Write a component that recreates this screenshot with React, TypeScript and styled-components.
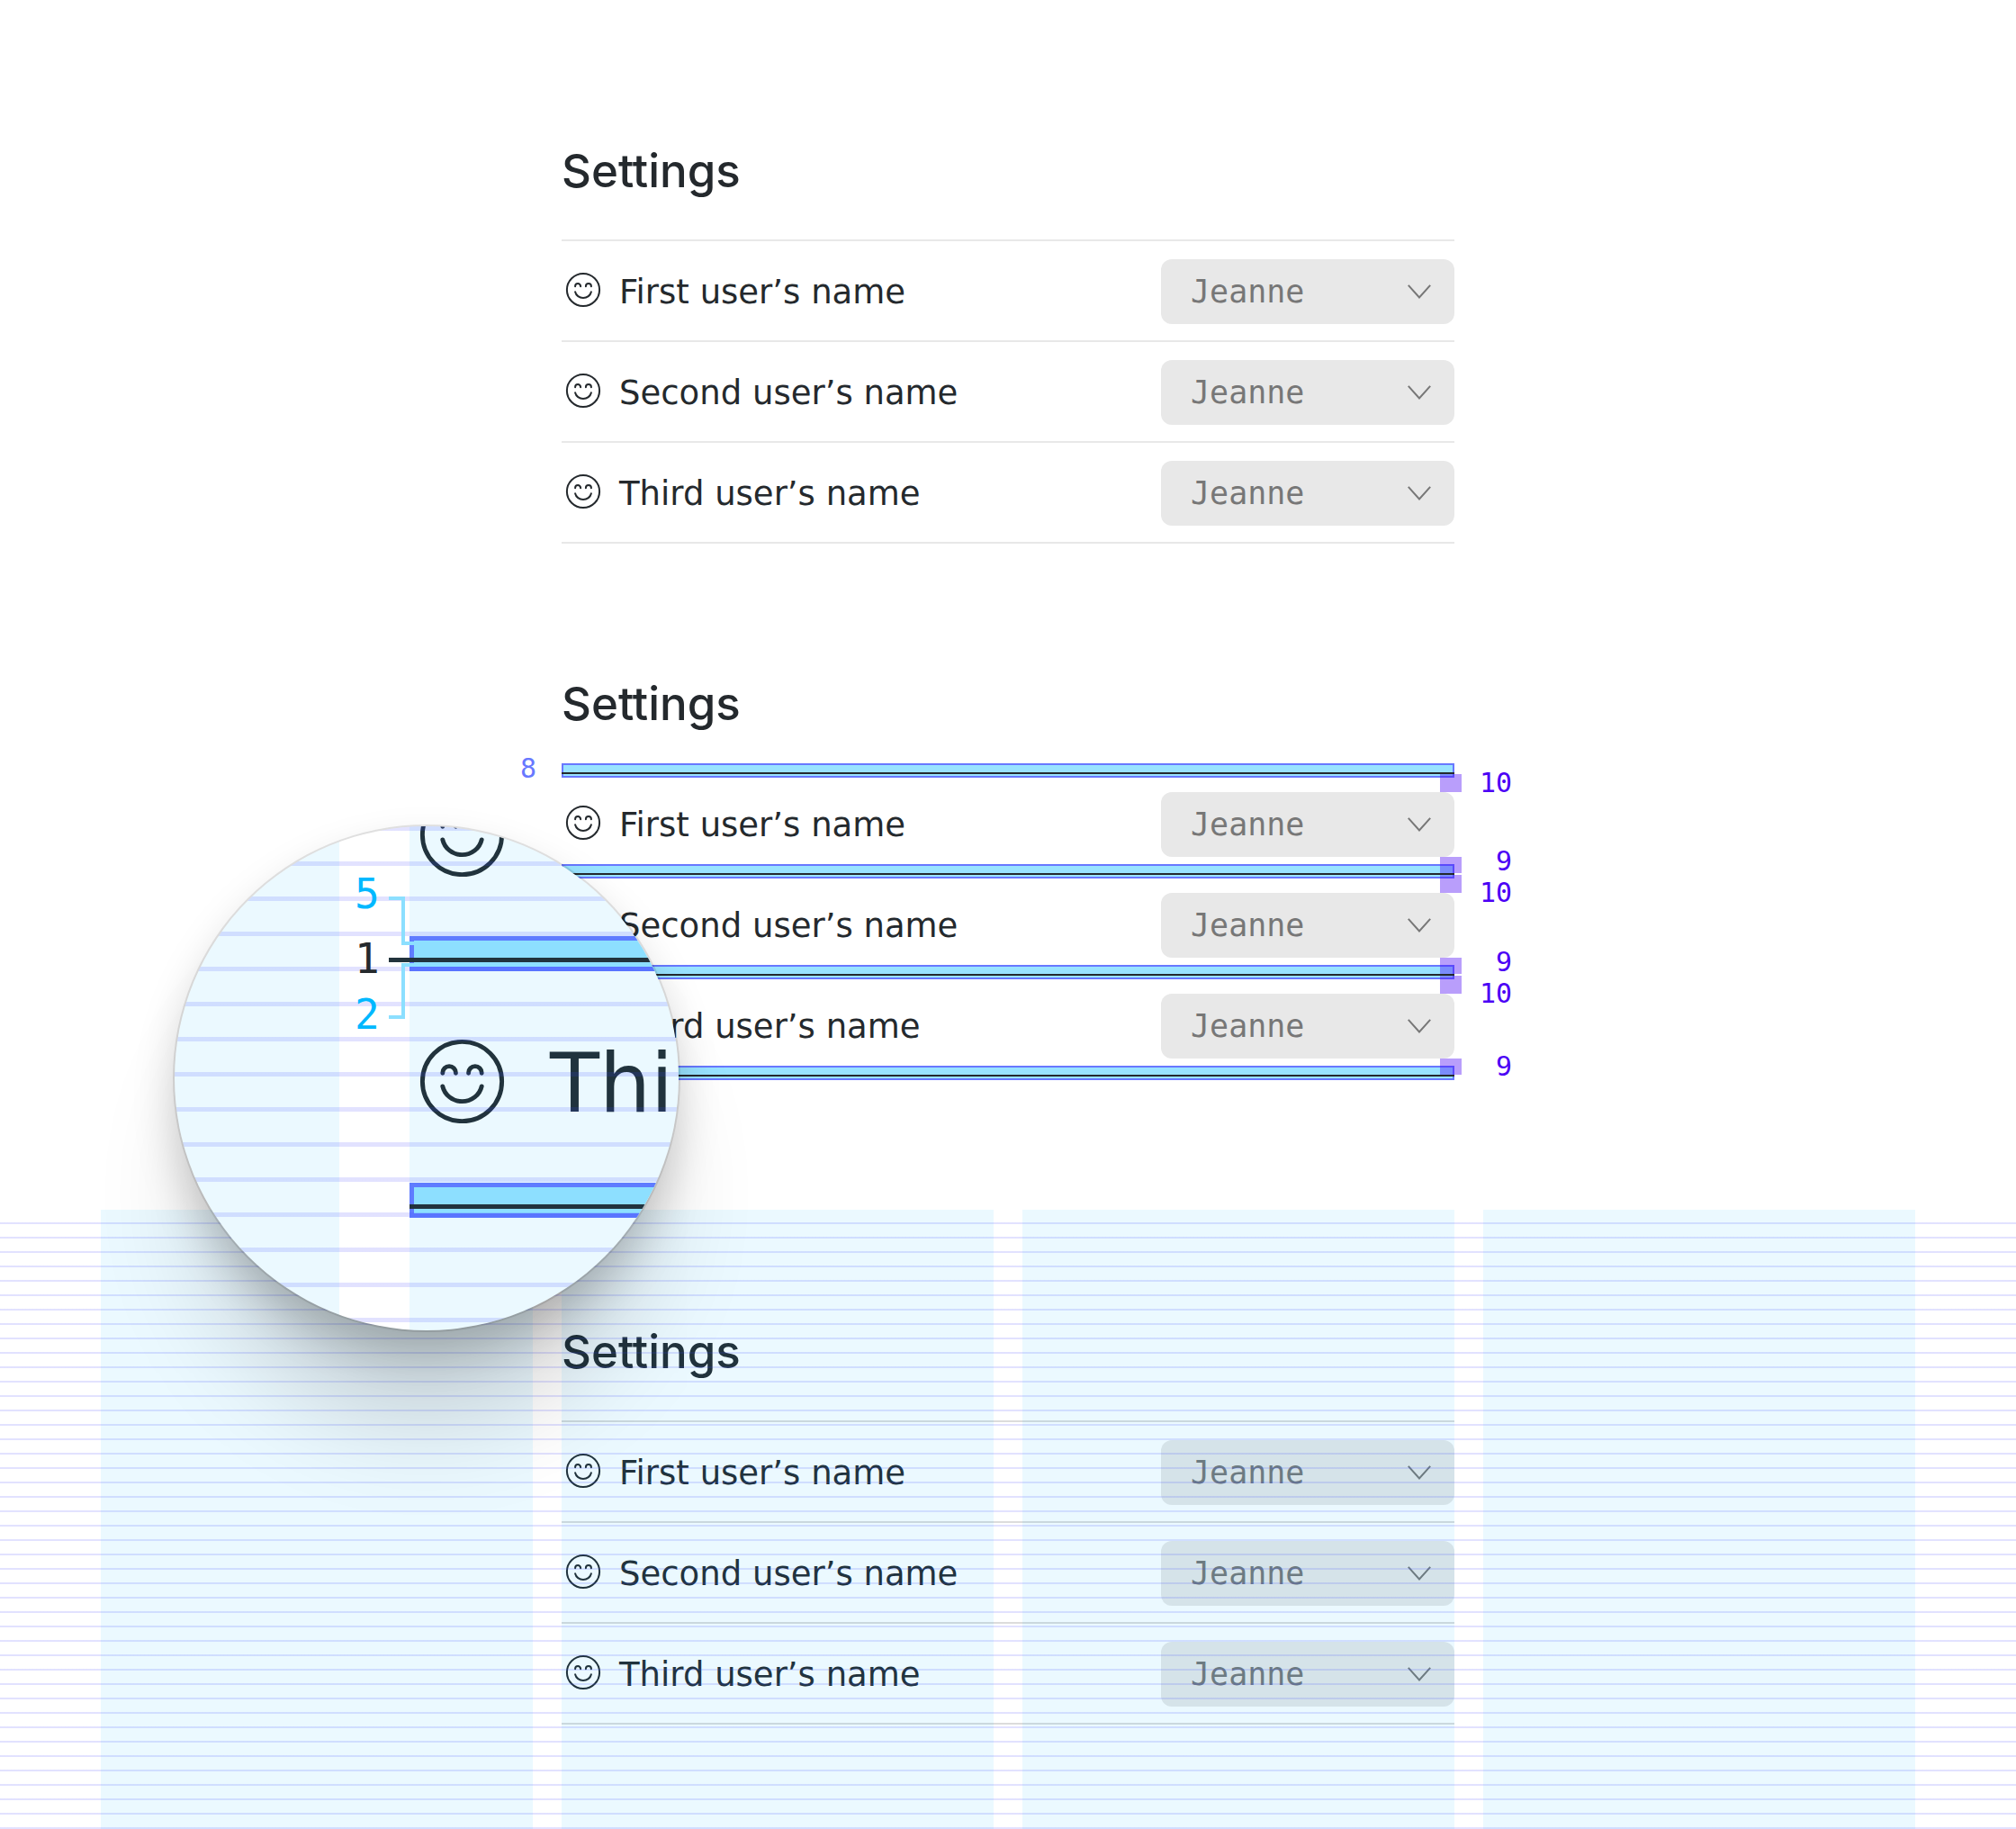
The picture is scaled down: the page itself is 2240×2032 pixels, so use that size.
import React, { useId } from "react";
import styled, { createGlobalStyle, css } from "styled-components";

const ink = "#24292d";
const mist = "rgba(0, 184, 255, 0.08)";
const rule = "rgba(60, 60, 255, 0.15)";
const violet = "#4b00f5";
const mono = `"DejaVu Sans Mono", "Liberation Mono", monospace`;

const GlobalStyle = createGlobalStyle`
  *, *::before, *::after { box-sizing: border-box; }
  body {
    margin: 0;
    background: #fff;
    color: ${ink};
    font-family: "DejaVu Sans", "Noto Sans", sans-serif;
  }
`;

const Page = styled.main`
  display: flex;
  flex-direction: column;
  min-height: 100vh;
  overflow: hidden;
`;

const columns = css`
  display: grid;
  grid-template-columns: repeat(4, 1fr);
  column-gap: 32px;
  padding-left: 5%;
  padding-right: 5%;
`;

const Section = styled.section<{ $top: number; $bottom: number; $grow?: boolean }>`
  ${columns}
  position: relative;
  align-content: start;
  padding-top: ${(p) => p.$top}px;
  padding-bottom: ${(p) => p.$bottom}px;
  flex-grow: ${(p) => (p.$grow ? 1 : 0)};
`;

const Panel = styled.div`
  grid-column: 2 / span 2;
  position: relative;
`;

const Title = styled.h2`
  margin: 0 0 42px;
  font-family: Inter, sans-serif;
  font-size: 51px;
  font-weight: 500;
  line-height: 68px;
`;

const List = styled.div`
  isolation: isolate;
`;

const Divider = styled.div<{ $tone: Tone }>`
  position: relative;
  height: 2px;
  background: ${(p) => ({ plain: "#e8e8e8", marked: ink, ruled: "#dcdcdc" })[p.$tone]};

  ${(p) =>
    p.$tone === "marked" &&
    css`
      &::before {
        content: "";
        position: absolute;
        z-index: -1;
        top: -10px;
        left: 0;
        right: 0;
        height: 16px;
        background: #99e3ff;
        border: 2px solid #6878ff;
      }
    `}
`;

const Row = styled.div`
  position: relative;
  display: flex;
  align-items: center;
  justify-content: space-between;
  padding: 20px 0 18px;
`;

const Name = styled.label`
  display: flex;
  align-items: flex-start;
  gap: 16px;
  height: 72px;
  padding-top: 10px;
  font-size: 37px;
  line-height: 54px;
`;

const SelectBox = styled.div`
  position: relative;
  width: 326px;
`;

const Select = styled.select`
  appearance: none;
  display: block;
  width: 100%;
  height: 72px;
  padding: 0 72px 0 33px;
  border: 0;
  border-radius: 12px;
  background: #e8e8e8;
  color: #777;
  font-family: ${mono};
  font-size: 35px;
`;

const Chevron = styled.svg`
  position: absolute;
  top: 28px;
  right: 26px;
  width: 26px;
  height: 16px;
  pointer-events: none;
`;

const Face = styled.svg<{ $size: number }>`
  flex: none;
  width: ${(p) => p.$size}px;
  height: ${(p) => p.$size}px;
  fill: none;
  stroke: ${ink};
  stroke-width: 2;
  stroke-linecap: round;
`;

const Gauge = styled.div<{ $side: "above" | "below" }>`
  position: absolute;
  right: -8px;
  width: 24px;
  background: rgba(71, 0, 245, 0.38);
  ${(p) => (p.$side === "below" ? "top: 0; height: 20px;" : "bottom: 0; height: 18px;")}
`;

const gaugeShift = { above: -4, below: 10 };

const GaugeValue = styled.span<{ $side: "above" | "below"; $crowded: boolean }>`
  position: absolute;
  top: ${(p) => (p.$crowded ? gaugeShift[p.$side] : 0)}px;
  left: 44px;
  width: 36px;
  height: 100%;
  display: flex;
  align-items: center;
  justify-content: flex-end;
  color: ${violet};
  font-family: ${mono};
  font-size: 30px;
  line-height: 1;
`;

const BarValue = styled.span`
  position: absolute;
  right: 100%;
  bottom: -10px;
  margin-right: 28px;
  color: #6878ff;
  font-family: ${mono};
  font-size: 30px;
  line-height: 32px;
`;

const Overlay = styled.div`
  ${columns}
  position: absolute;
  inset: 0;
  pointer-events: none;
  background: repeating-linear-gradient(transparent 0 14px, ${rule} 14px 16px);
`;

const OverlayColumn = styled.div`
  background: ${mist};
`;

/* Magnifier */

const Lens = styled.div`
  position: absolute;
  z-index: 2;
  top: 170px;
  left: -430px;
  width: 560px;
  height: 560px;
  border-radius: 50%;
  background: #fff;
  box-shadow:
    0 0 0 2px rgba(0, 0, 0, 0.1),
    0 24px 48px rgba(0, 0, 0, 0.18),
    0 128px 128px -40px rgba(0, 0, 0, 0.2);
`;

const LensView = styled.div`
  position: relative;
  height: 100%;
  border-radius: 50%;
  overflow: hidden;
`;

const LensList = styled.div`
  display: flex;
  flex-direction: column;
  margin: -152px 0 0 261px;
`;

const LensRow = styled.div`
  flex: none;
  height: 274px;
`;

const LensBar = styled.div`
  height: 39px;
  background:
    linear-gradient(${ink}, ${ink}) 0 24px / 100% 5px no-repeat,
    linear-gradient(#6878ff, #6878ff) 0 0 / 5px 100% no-repeat,
    linear-gradient(#6878ff, #6878ff) 0 0 / 100% 5px no-repeat,
    linear-gradient(#6878ff, #6878ff) 0 100% / 100% 5px no-repeat,
    #99e3ff;
`;

const LensName = styled.div`
  display: flex;
  align-items: flex-start;
  gap: 39px;
  padding-top: 64px;
  font-size: 90px;
  line-height: 122px;
  white-space: nowrap;
`;

const LensOverlay = styled.div`
  position: absolute;
  inset: 0;
  display: grid;
  grid-template-columns: 183px 1fr;
  column-gap: 78px;
  background: repeating-linear-gradient(${rule} 0 5px, transparent 5px 39px);
`;

const Bracket = styled.svg`
  position: absolute;
  top: 70px;
  left: 232px;
  width: 40px;
  height: 152px;
  fill: none;
  stroke: #8cdfff;
  stroke-width: 4;
`;

const LensValues = styled.div`
  position: absolute;
  top: 48px;
  left: 200px;
  display: grid;
  grid-template-rows: 72px 62px;
  grid-auto-rows: 62px;
  font-family: ${mono};
  font-size: 46px;
  line-height: 54px;
`;

const LensValue = styled.span<{ $accent?: boolean }>`
  color: ${(p) => (p.$accent ? "#00b8ff" : ink)};
`;

type Tone = "plain" | "marked" | "ruled";

const users = ["First user’s name", "Second user’s name", "Third user’s name"];

function Smiley({ size = 48 }: { size?: number }) {
  return (
    <Face $size={size} viewBox="0 0 48 48" aria-hidden="true">
      <circle cx="24" cy="24" r="18.1" />
      <path d="M15.1 20.2v-.1a3 3 0 0 1 6 0v.1M26.9 20.2v-.1a3 3 0 0 1 6 0v.1" />
      <path d="M15.1 26.2c.9 4 4.6 6.9 8.9 6.9s8-2.9 8.9-6.9" />
    </Face>
  );
}

function SettingsRow({ name, tone, first, last }: { name: string; tone: Tone; first: boolean; last: boolean }) {
  const id = useId();
  return (
    <Row>
      <Name htmlFor={id}>
        <Smiley />
        {name}
      </Name>
      <SelectBox>
        <Select id={id} defaultValue="Jeanne">
          <option>Jeanne</option>
        </Select>
        <Chevron viewBox="0 0 26 16" fill="none" stroke="#777" strokeWidth="2" aria-hidden="true">
          <path d="M.8.8 13 14.4 25.2.8" />
        </Chevron>
      </SelectBox>
      {tone === "marked" && (
        <>
          <Gauge $side="below">
            <GaugeValue $side="below" $crowded={!first}>10</GaugeValue>
          </Gauge>
          <Gauge $side="above">
            <GaugeValue $side="above" $crowded={!last}>9</GaugeValue>
          </Gauge>
        </>
      )}
    </Row>
  );
}

function Settings({ tone }: { tone: Tone }) {
  return (
    <>
      <Title>Settings</Title>
      <List>
        {users.map((name, i) => (
          <React.Fragment key={name}>
            <Divider $tone={tone}>{tone === "marked" && i === 0 && <BarValue>8</BarValue>}</Divider>
            <SettingsRow name={name} tone={tone} first={i === 0} last={i === users.length - 1} />
          </React.Fragment>
        ))}
        <Divider $tone={tone} />
      </List>
    </>
  );
}

function Magnifier() {
  return (
    <Lens>
      <LensView>
        <LensList>
          <LensRow>
            <LensBar />
            <LensName>
              <Smiley size={117} />
            </LensName>
          </LensRow>
          <LensRow>
            <LensBar />
            <LensName>
              <Smiley size={117} />
              {users[2]}
            </LensName>
          </LensRow>
          <LensBar />
        </LensList>
        <LensOverlay>
          <OverlayColumn />
          <OverlayColumn />
        </LensOverlay>
        <Bracket viewBox="0 0 40 152" aria-hidden="true">
          <path d="M6 10H22V60H34M34 84H22V142H6" />
          <path d="M6 78.5H30" stroke="#22333c" strokeWidth="5" />
        </Bracket>
        <LensValues>
          <LensValue $accent>5</LensValue>
          <LensValue>1</LensValue>
          <LensValue $accent>2</LensValue>
        </LensValues>
      </LensView>
    </Lens>
  );
}

export default function App() {
  return (
    <>
      <GlobalStyle />
      <Page>
        <Section $top={156} $bottom={144}>
          <Panel>
            <Settings tone="plain" />
          </Panel>
        </Section>
        <Section $top={0} $bottom={148}>
          <Panel>
            <Settings tone="marked" />
            <Magnifier />
          </Panel>
        </Section>
        <Section $top={124} $bottom={116} $grow>
          <Panel>
            <Settings tone="ruled" />
          </Panel>
          <Overlay>
            <OverlayColumn />
            <OverlayColumn />
            <OverlayColumn />
            <OverlayColumn />
          </Overlay>
        </Section>
      </Page>
    </>
  );
}
